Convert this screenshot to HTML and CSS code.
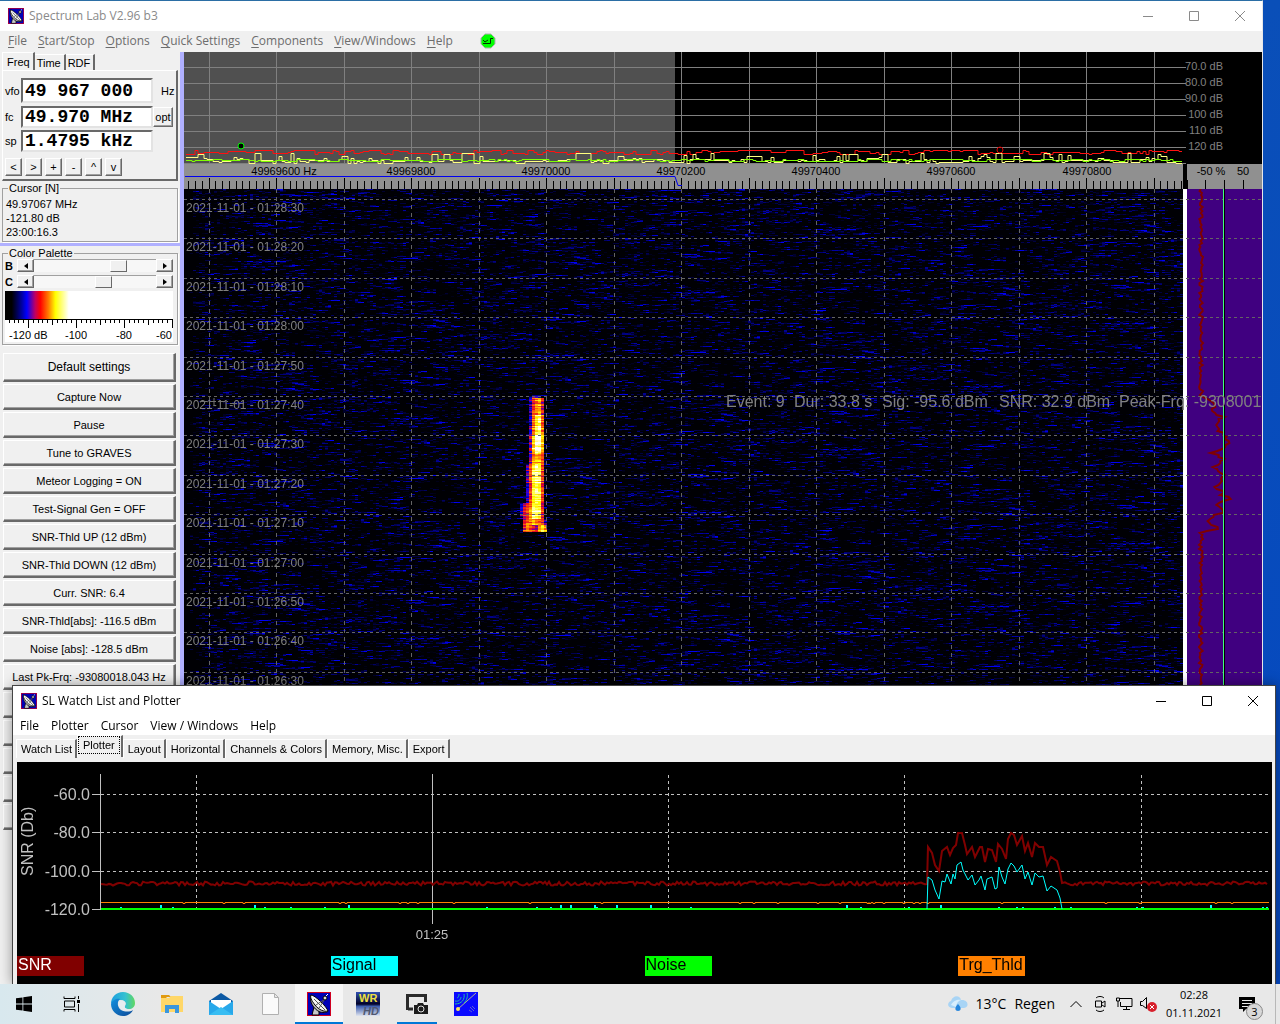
FILE: index.html
```html
<!DOCTYPE html>
<html lang="en">
<head>
    <meta charset="UTF-8">
    <meta name="viewport" content="width=device-width, initial-scale=1.0">
    <title>Spectrum Lab</title>

    <link rel="stylesheet" href="styles.css">
</head>

<body>

    <svg class="sprite" aria-hidden="true">
        <symbol id="dish" viewBox="0 0 24 24">
            <rect width="24" height="24" fill="#d00020"/>
            <rect x="1" y="1" width="22" height="22" fill="#0000b8"/>
            <path d="M5 23l2-8 3-1 2 5v4z" fill="#c8c8c8" stroke="#000"/>
            <path d="M4 3c-2 6 2 14 9 17 4 1 8 0 8-1z" fill="#b8b8b8" stroke="#000"/>
            <path d="M4 3c4 0 16 12 17 16-4 1-9-1-13-6S3 5 4 3z" fill="#f4f4f4" stroke="#000"/>
            <path d="M7 7l11 11M9 13l9-6M12 16l6-9" stroke="#555" fill="none"/>
            <circle cx="18" cy="6" r="2" fill="#ddd" stroke="#000"/>
            <path d="M19 4l2-2" stroke="#fff"/>
        </symbol>
        <symbol id="win-min" viewBox="0 0 10 10"><path d="M0 5.500h10" stroke="currentColor"/></symbol>
        <symbol id="win-max" viewBox="0 0 10 10"><path d="M.5.5h9v9h-9z" stroke="currentColor" fill="none"/></symbol>
        <symbol id="win-close" viewBox="0 0 10 10"><path d="M0 0l10 10M10 0L0 10" stroke="currentColor"/></symbol>
    </svg>

    <main class="desktop">

        <!-- main window -->
        <section class="window window_main">
            <header class="titlebar">
                <svg class="titlebar__icon"><use href="#dish"/></svg>
                <h1 class="titlebar__text">Spectrum Lab V2.96 b3</h1>
                <button class="titlebar__button" aria-label="Minimize"><svg><use href="#win-min"/></svg></button>
                <button class="titlebar__button" aria-label="Maximize"><svg><use href="#win-max"/></svg></button>
                <button class="titlebar__button" aria-label="Close"><svg><use href="#win-close"/></svg></button>
            </header>
            <nav class="menu">
                <button class="menu__item"><u>F</u>ile</button>
                <button class="menu__item"><u>S</u>tart/Stop</button>
                <button class="menu__item"><u>O</u>ptions</button>
                <button class="menu__item"><u>Q</u>uick Settings</button>
                <button class="menu__item"><u>C</u>omponents</button>
                <button class="menu__item"><u>V</u>iew/Windows</button>
                <button class="menu__item"><u>H</u>elp</button>
                <svg class="menu__status" viewBox="0 0 16 16">
                    <path d="M5 1h6l4 4v6l-4 4H5l-4-4V5z" fill="#00ff00" stroke="#b0b0b0"/>
                    <path d="M3 7l2 2 3-2M3 10.500h7.500v-5H13" fill="none" stroke="#003000"/>
                </svg>
            </nav>

            <div class="main">
                <aside class="sidebar">
                    <div class="tabs">
                        <button class="tabs__button _active">Freq</button>
                        <button class="tabs__button">Time</button>
                        <button class="tabs__button">RDF</button>
                    </div>
                    <div class="freq">
                        <div class="freq__row freq__row_tall">
                            <label for="vfo">vfo</label>
                            <input class="freq__input" id="vfo" type="text" value="49 967 000">
                            <span class="freq__unit">Hz</span>
                        </div>
                        <div class="freq__row">
                            <label for="fc">fc</label>
                            <input class="freq__input" id="fc" type="text" value="49.970 MHz">
                            <button class="freq__opt">opt</button>
                        </div>
                        <div class="freq__row">
                            <label for="sp">sp</label>
                            <input class="freq__input" id="sp" type="text" value="1.4795 kHz">
                        </div>
                        <div class="freq__buttons">
                            <button>&lt;</button>
                            <button>&gt;</button>
                            <button>+</button>
                            <button>-</button>
                            <button>^</button>
                            <button>v</button>
                        </div>
                    </div>

                    <fieldset class="group group_cursor">
                        <legend>Cursor [N]</legend>
                        <p>49.97067 MHz</p>
                        <p>-121.80 dB</p>
                        <p>23:00:16.3</p>
                    </fieldset>

                    <div class="sidebar__split"></div>

                    <fieldset class="group group_palette">
                        <legend>Color Palette</legend>
                        <div class="scroll">
                            <label for="bright">B</label>
                            <button aria-label="B down"><svg viewBox="0 0 4 6"><path d="M4 0v6L0 3z"/></svg></button>
                            <input id="bright" type="range" min="0" max="100" value="72">
                            <button aria-label="B up"><svg viewBox="0 0 4 6"><path d="M0 0v6l4-3z"/></svg></button>
                        </div>
                        <div class="scroll">
                            <label for="contrast">C</label>
                            <button aria-label="C down"><svg viewBox="0 0 4 6"><path d="M4 0v6L0 3z"/></svg></button>
                            <input id="contrast" type="range" min="0" max="100" value="58">
                            <button aria-label="C up"><svg viewBox="0 0 4 6"><path d="M0 0v6l4-3z"/></svg></button>
                        </div>
                        <div class="palette">
                            <div class="palette__colors"></div>
                            <svg class="palette__scale" id="paletteScale">
                                <text x="4" y="20">-120 dB</text>
                                <text x="60" y="20">-100</text>
                                <text x="111" y="20">-80</text>
                                <text x="151" y="20">-60</text>
                            </svg>
                        </div>
                    </fieldset>

                    <div class="actions">
                        <button class="actions__button actions__button_big">Default settings</button>
                        <button class="actions__button">Capture Now</button>
                        <button class="actions__button">Pause</button>
                        <button class="actions__button">Tune to GRAVES</button>
                        <button class="actions__button">Meteor Logging = ON</button>
                        <button class="actions__button">Test-Signal Gen = OFF</button>
                        <button class="actions__button">SNR-Thld UP (12 dBm)</button>
                        <button class="actions__button">SNR-Thld DOWN (12 dBm)</button>
                        <button class="actions__button">Curr. SNR: 6.4</button>
                        <button class="actions__button">SNR-Thld[abs]: -116.5 dBm</button>
                        <button class="actions__button">Noise [abs]: -128.5 dBm</button>
                        <button class="actions__button">Last Pk-Frq: -93080018.043 Hz</button>
                        <button class="actions__button"></button>
                        <button class="actions__button"></button>
                        <button class="actions__button"></button>
                        <button class="actions__button"></button>
                        <button class="actions__button"></button>
                    </div>
                </aside>

                <div class="plots">
                    <svg class="spectrum" id="spectrum">
                        <rect width="491" height="112" fill="#505050"/>
                        <g id="spectrumDraw"></g>
                        <circle cx="57" cy="94" r="3" fill="#000" stroke="#00ff00"/>
                        <circle cx="816" cy="98" r="3" fill="none" stroke="#e00000"/>
                        <svg x="100%" overflow="visible" class="spectrum__labels">
                            <text x="-39" y="18">70.0 dB</text>
                            <text x="-39" y="34">80.0 dB</text>
                            <text x="-39" y="50">90.0 dB</text>
                            <text x="-39" y="66">100 dB</text>
                            <text x="-39" y="82">110 dB</text>
                            <text x="-39" y="98">120 dB</text>
                        </svg>
                    </svg>

                    <div class="ruler">
                        <svg class="ruler__freq" id="ruler">
                            <g id="rulerDraw"></g>
                            <path d="M1 12.500H491L494 21.500H498" fill="none" stroke="#0000f0"/>
                            <text x="100" y="11">49969600 Hz</text>
                            <text x="227" y="11">49969800</text>
                            <text x="362" y="11">49970000</text>
                            <text x="497" y="11">49970200</text>
                            <text x="632" y="11">49970400</text>
                            <text x="767" y="11">49970600</text>
                            <text x="903" y="11">49970800</text>
                        </svg>
                        <svg class="ruler__side">
                            <path d="M.5 16v9M18.500 16v9M37.500 16v9M56.500 16v9" stroke="#000"/>
                            <text x="24" y="11">-50 %</text>
                            <text x="56" y="11">50</text>
                        </svg>
                    </div>

                    <div class="waterfall">
                        <canvas class="waterfall__canvas" id="waterfall"></canvas>
                        <div class="waterfall__side"></div>
                        <svg class="waterfall__grid" id="grid">
                            <g id="gridDraw"></g>
                            <g class="waterfall__times" id="times"></g>
                            <path d="M16 212.500H44M30 209v8M46 214.500H60" stroke="#707070" stroke-dasharray="7 2"/>
                            <svg x="100%" overflow="visible">
                                <path id="sideTrace" fill="none" stroke="#800000" stroke-width="2"/>
                                <path d="M-38.500 0V900" stroke="#40ff80"/>
                                <path d="M-37.500 0V900" stroke="#000"/>
                                <g class="waterfall__event">
                                    <text x="-536" y="218">Event: 9</text>
                                    <text x="-468" y="218">Dur: 33.8 s</text>
                                    <text x="-380" y="218">Sig: -95.6 dBm</text>
                                    <text x="-263" y="218">SNR: 32.9 dBm</text>
                                    <text x="-143" y="218">Peak-Frq: -9308001</text>
                                </g>
                            </svg>
                        </svg>
                    </div>
                </div>
            </div>
        </section>

        <!-- plotter window -->
        <section class="window window_plotter">
            <header class="titlebar">
                <svg class="titlebar__icon"><use href="#dish"/></svg>
                <h2 class="titlebar__text">SL Watch List and Plotter</h2>
                <button class="titlebar__button" aria-label="Minimize"><svg><use href="#win-min"/></svg></button>
                <button class="titlebar__button" aria-label="Maximize"><svg><use href="#win-max"/></svg></button>
                <button class="titlebar__button" aria-label="Close"><svg><use href="#win-close"/></svg></button>
            </header>
            <nav class="menu">
                <button class="menu__item">File</button>
                <button class="menu__item">Plotter</button>
                <button class="menu__item">Cursor</button>
                <button class="menu__item">View / Windows</button>
                <button class="menu__item">Help</button>
            </nav>
            <div class="tabs tabs_plotter">
                <button class="tabs__button">Watch List</button>
                <button class="tabs__button _active"><span>Plotter</span></button>
                <button class="tabs__button">Layout</button>
                <button class="tabs__button">Horizontal</button>
                <button class="tabs__button">Channels &amp; Colors</button>
                <button class="tabs__button">Memory, Misc.</button>
                <button class="tabs__button">Export</button>
            </div>
            <div class="plotter">
                <svg class="plotter__chart" id="plotter">
                    <g id="plotterGrid"></g>
                    <g class="plotter__labels">
                        <text x="73" y="38">-60.0</text>
                        <text x="73" y="76">-80.0</text>
                        <text x="73" y="115">-100.0</text>
                        <text x="73" y="153">-120.0</text>
                    </g>
                    <text class="plotter__axis" transform="translate(16 114) rotate(-90)">SNR (Db)</text>
                    <text class="plotter__time" x="415" y="177">01:25</text>
                    <g id="plotterTraces" fill="none"></g>
                </svg>
                <ul class="legend">
                    <li><span class="legend__item legend__item_snr">SNR</span></li>
                    <li><span class="legend__item legend__item_signal">Signal</span></li>
                    <li><span class="legend__item legend__item_noise">Noise</span></li>
                    <li><span class="legend__item legend__item_thld">Trg_Thld</span></li>
                </ul>
            </div>
        </section>
    </main>

    <footer class="taskbar">
        <button class="taskbar__button" aria-label="Start">
            <svg width="16" height="16" viewBox="0 0 16 16"><path d="M0 2.300L6.500 1.400v6.200H0zM7.300 1.300L16 0v7.600H7.300zM0 8.400h6.500v6.200L0 13.700zM7.300 8.400H16V16l-8.700-1.200z"/></svg>
        </button>
        <button class="taskbar__button" aria-label="Task view">
            <svg width="18" height="16" viewBox="0 0 18 16" fill="none" stroke="#000"><path d="M1 .5v2h11v-2M1 15.500v-2h11v2M1.500 5h10v6h-10zM15.500 0v3M15.500 8v8"/><path d="M14 4h3v3h-3z" fill="#000" stroke="none"/></svg>
        </button>
        <div class="taskbar__apps">
            <button class="taskbar__button" aria-label="Edge">
                <svg width="24" height="24" viewBox="0 0 24 24">
                    <defs>
                        <linearGradient id="edgeTop" x1="0" x2="1"><stop offset="0" stop-color="#1b9de0"/><stop offset=".6" stop-color="#35c1d0"/><stop offset="1" stop-color="#60d860"/></linearGradient>
                        <linearGradient id="edgeLow" x1="0" x2="1" y1="0" y2="1"><stop offset="0" stop-color="#1490df"/><stop offset="1" stop-color="#0c4a98"/></linearGradient>
                    </defs>
                    <path d="M0 12C0 5 5 0 12 0s12 5 12 11c0 4-3 6-6 6s-5-1-4-3c3-4-2-6-5-6-5 0-9 3-9 4z" fill="url(#edgeTop)"/>
                    <path d="M0 12c1-4 6-6 9-5-3 2-3 8 1 11 4 2 9 2 12 0-2 4-6 6-10 6C5 24 0 18 0 12z" fill="url(#edgeLow)"/>
                    <path d="M9 9c3-2 6 1 5 4-1 2 0 4 3 4-3 2-8 1-9-3 0-2 0-4 1-5z" fill="#e8edf0"/>
                </svg>
            </button>
            <button class="taskbar__button" aria-label="Explorer">
                <svg width="22" height="20" viewBox="0 0 22 20">
                    <path d="M0 1h8l2 2h-4l-2 2H0z" fill="#e09a10"/>
                    <path d="M0 4h8l2-2h12v16H0z" fill="#ffd768"/>
                    <path d="M4 19v-8h14v8h-4v-4H8v4z" fill="#3a96dd"/>
                </svg>
            </button>
            <button class="taskbar__button" aria-label="Mail">
                <svg width="24" height="22" viewBox="0 0 24 22">
                    <path d="M0 8l12-8 12 8v4H0z" fill="#0c59a4"/>
                    <path d="M2 7h20v7l-10 3L2 14z" fill="#fff"/>
                    <path d="M0 8l12 8 12-8v14H0z" fill="#28a8ea"/>
                    <path d="M0 22l12-8 12 8z" fill="#38bdf2"/>
                </svg>
            </button>
            <button class="taskbar__button" aria-label="Document">
                <svg width="17" height="22" viewBox="0 0 17 22"><path d="M.5.5h12l4 4v17H.5zM12.500.5v4h4" fill="#fafafa" stroke="#b0b0b0"/></svg>
            </button>
            <button class="taskbar__button taskbar__button_active" aria-label="Spectrum Lab">
                <svg width="24" height="24"><use href="#dish"/></svg>
            </button>
            <button class="taskbar__button" aria-label="WR HD">
                <svg width="24" height="24" viewBox="0 0 24 24">
                    <defs><linearGradient id="wr" x1="0" x2="0" y1="0" y2="1"><stop offset="0" stop-color="#3050b0"/><stop offset=".5" stop-color="#000028"/><stop offset=".6" stop-color="#4060b0"/><stop offset="1" stop-color="#e0e4ee"/></linearGradient></defs>
                    <rect width="24" height="24" fill="url(#wr)"/>
                    <text class="taskbar__wr" x="3" y="10">WR</text>
                    <text class="taskbar__hd" x="7" y="23">HD</text>
                </svg>
            </button>
            <button class="taskbar__button taskbar__button_open" aria-label="Capture">
                <svg width="24" height="20" viewBox="0 0 24 20">
                    <path d="M8 15H3M2.500 16V1.500h18V8" fill="none" stroke="#2a2a2a" stroke-width="3"/>
                    <path d="M9 11h3l1-2h5l1 2h4v9H9z" fill="#1c1c1c"/>
                    <circle cx="16" cy="15" r="3" fill="none" stroke="#e0e0e0"/>
                </svg>
            </button>
            <button class="taskbar__button" aria-label="Meteor">
                <svg width="24" height="24" viewBox="0 0 24 24">
                    <rect width="24" height="24" fill="#0a0aff"/>
                    <path d="M4 17L22 1" stroke="#b0b090"/>
                    <circle cx="4" cy="17" r="2" fill="#ffe860"/>
                    <path d="M1 9c4 1 6-2 6-4M1 12c7 0 10-5 9-10M3 6c1 0 2-2 2-4M10 11c3-3 4-7 3-10" fill="none" stroke="#20c0a0"/>
                    <path d="M16 15l4 4M18 14l3 3M15 18l3 2" stroke="#6060d0"/>
                </svg>
            </button>
        </div>

        <div class="tray">
            <button class="tray__weather">
                <svg width="20" height="16" viewBox="0 0 20 16">
                    <path d="M4 12c-5 0-5-6-1-7 2-6 9-6 10-1 7-1 9 7 3 8z" fill="#a8d4f5"/>
                    <path d="M3 9c2-5 8-6 10-5-3 1-5 4-5 7z" fill="#d8eefc"/>
                    <path d="M10 8c4 4 3 7 0 7s-4-3 0-7z" fill="#2686dc"/>
                </svg>
                <span>13°C</span>
                <span>Regen</span>
            </button>
            <button class="tray__icon" aria-label="Show hidden icons"><svg width="12" height="8" viewBox="0 0 12 8" fill="none" stroke="#000"><path d="M.5 7L6 1.500 11.500 7"/></svg></button>
            <button class="tray__icon" aria-label="Meet now"><svg width="13" height="16" viewBox="0 0 13 16" fill="none" stroke="#000"><path d="M2 2c2-2 6-2 8 0M2 14c2 2 6 2 8 0M1.500 5h6v6h-6zM8 7l3-2v6L8 9"/></svg></button>
            <button class="tray__icon" aria-label="Network"><svg width="17" height="14" viewBox="0 0 17 14" fill="none" stroke="#000"><path d="M4 1.500h12v8H4.500V5M7 12.500h7M10.500 9.500v3M.5 1v3h3V1zM2 4v6"/></svg></button>
            <button class="tray__icon" aria-label="Volume"><svg width="17" height="15" viewBox="0 0 17 15" fill="none" stroke="#000"><path d="M.5 4.500h2l4-4v11l-4-3h-2z"/><circle cx="12" cy="10" r="5" fill="#d8202c" stroke="none"/><path d="M10 8l4 4M14 8l-4 4" stroke="#fff"/></svg></button>
            <button class="tray__clock"><span>02:28</span><span>01.11.2021</span></button>
            <button class="tray__notes" aria-label="Notifications">
                <svg width="16" height="15" viewBox="0 0 16 15"><path d="M0 0h16v12H7l-3 3v-3H0z"/><path d="M3 3.500h10M3 6.500h10M3 9.500h6" stroke="#e8e8e8"/></svg>
                <span class="tray__badge">3</span>
            </button>
        </div>
    </footer>

    <script src="script.js"></script>
</body>

</html>
```

FILE: styles.css
```css
* {
    box-sizing: border-box;
}

body {
    margin: 0;
    height: 100vh;
    display: flex;
    flex-direction: column;
    overflow: hidden;
    font: 11px/14px "Liberation Sans", Arial, sans-serif;
    color: #000;
}

button {
    margin: 0;
    padding: 0;
    border: 0;
    background: none;
    font: inherit;
    color: inherit;
    white-space: nowrap;
}

svg {
    display: block;
}

.sprite {
    display: none;
}

.desktop {
    position: relative;
    flex: 1;
    overflow: hidden;
    background: linear-gradient(#0a4fb8, #0548c0);
}

/* ========== WINDOWS =========== */
.window {
    position: absolute;
    display: flex;
    flex-direction: column;
    background: #f0f0f0;
}

.window_main {
    top: 0;
    left: 0;
    right: 17px;
    bottom: 0;
    border-top: 1px solid #2b6ea5;
    border-right: 1px solid #e8e8e8;
}

.window_plotter {
    top: 685px;
    left: 12px;
    right: 4px;
    bottom: 0;
    border: 1px solid #444;
    border-bottom: 0;
    box-shadow: 0 0 12px rgba(0, 0, 0, 0.4);
}

.titlebar {
    display: flex;
    align-items: center;
    height: 30px;
    padding-left: 8px;
    background: #fff;
}

.titlebar__icon {
    width: 16px;
    height: 16px;
}

.titlebar__text {
    flex: 1;
    margin: 0;
    padding-left: 5px;
    font: 12px/16px "Open Sans", sans-serif;
}

.titlebar__button {
    display: flex;
    align-items: center;
    justify-content: center;
    width: 46px;
    height: 30px;
    padding-left: 2px;
}

.titlebar__button svg {
    width: 10px;
    height: 10px;
}

.window_main .titlebar {
    color: #8a8a8a;
}

.window_main .menu {
    color: #6d6d6d;
}

.menu {
    display: flex;
    align-items: center;
    gap: 11px;
    height: 20px;
    margin-bottom: 1px;
    padding-left: 8px;
    font: 12px/16px "Open Sans", sans-serif;
}

.menu u {
    text-underline-offset: 2px;
}

.menu__status {
    width: 16px;
    height: 16px;
    margin-left: 16px;
}

.window_plotter .menu {
    gap: 12px;
    height: 19px;
    margin: 0;
    padding-left: 7px;
    background: #fff;
}

.main {
    display: flex;
    flex: 1;
    min-height: 0;
}

/* ========== SIDEBAR =========== */
.sidebar {
    width: 184px;
    padding: 0 2px;
    border-right: 4px solid #b0b0ff;
    overflow: hidden;
}

.tabs {
    display: flex;
    align-items: flex-end;
    height: 18px;
}

.tabs__button {
    height: 16px;
    padding: 0 3px 0 2px;
    border-top: 1px solid #fff;
    border-right: 2px solid #696969;
}

.tabs__button._active {
    height: 18px;
    padding: 0 3px 0 4px;
    border-left: 1px solid #fff;
}

.freq {
    height: 111px;
    padding-top: 7px;
    border: 1px solid #fff;
    border-right: 2px solid #696969;
    border-bottom: 2px solid #696969;
}

.freq__row {
    display: flex;
    align-items: center;
    height: 22px;
    margin-bottom: 2px;
    padding-left: 2px;
}

.freq__row_tall {
    height: 25px;
    margin-bottom: 3px;
}

.freq__row label {
    flex: none;
    width: 16px;
}

.freq__input {
    flex: none;
    width: 132px;
    height: 100%;
    padding: 0 0 0 2px;
    border: 2px solid;
    border-color: #696969 #e3e3e3 #e3e3e3 #696969;
    background: #fff;
    font: bold 18px/20px "Liberation Mono", monospace;
}

.freq__unit {
    margin-left: 8px;
}

.freq__opt,
.freq__buttons button,
.scroll button,
.actions__button {
    border: 1px solid;
    border-color: #fff #696969 #696969 #fff;
    box-shadow: inset -1px -1px #a0a0a0;
    background: #f0f0f0;
}

.freq__opt {
    width: 20px;
    height: 20px;
}

.freq__buttons {
    display: flex;
    gap: 3px;
    padding: 4px 2px;
}

.freq__buttons button {
    width: 17px;
    height: 18px;
    line-height: 12px;
}

.group {
    min-width: 0;
    margin: 0;
    padding: 0;
    border: 1px solid #a0a0a0;
    box-shadow: 1px 1px #fff;
}

.group legend {
    margin-left: 5px;
    padding: 0 1px;
    line-height: 14px;
}

.group p {
    margin: 0 0 0 3px;
}

.group_cursor {
    height: 61px;
    padding-top: 2px;
}

.sidebar__split {
    height: 3px;
    margin: 1px -2px 0;
    background: #b0b0ff;
}

.group_palette {
    height: 99px;
}

.scroll {
    display: flex;
    align-items: center;
    height: 13px;
    margin: 0 4px 3px 2px;
}

.group_palette legend + .scroll {
    margin-top: -1px;
}

.scroll label {
    width: 12px;
    font-weight: bold;
}

.scroll button {
    display: flex;
    align-items: center;
    justify-content: center;
    width: 17px;
    height: 13px;
}

.scroll svg {
    width: 4px;
    height: 6px;
}

.scroll input {
    flex: 1;
    width: 0;
    height: 13px;
    margin: 0;
    appearance: none;
    background: #f7f7f7;
    border-top: 1px solid #a0a0a0;
}

.scroll input::-webkit-slider-thumb {
    appearance: none;
    width: 17px;
    height: 12px;
    border: 1px solid;
    border-color: #fff #696969 #696969 #fff;
    background: #f0f0f0;
}

.palette {
    margin: 0 4px 0 2px;
    background: #fff;
}

.palette__colors {
    height: 28px;
    background: linear-gradient(90deg, #000 4%, #0000a0 10%, #0000ff 13%, #c00060 18%, #ff0000 21%, #ff8000 26%, #ffff00 30%, #fff 38%);
}

.palette__scale {
    width: 100%;
    height: 23px;
}

/* buttons under the palette */
.actions {
    display: flex;
    flex-direction: column;
    gap: 2px;
    margin: 8px 2px 0 1px;
}

.actions__button {
    flex: none;
    height: 26px;
    border-right-width: 2px;
    border-bottom-width: 2px;
}

.actions__button_big {
    height: 29px;
    font-size: 12px;
}

/* ========== PLOTS =========== */
.plots {
    display: flex;
    flex: 1;
    flex-direction: column;
    min-width: 0;
    background: #000;
}

.spectrum {
    flex: none;
    width: 100%;
    height: 112px;
}

.spectrum__labels {
    fill: #808080;
    text-anchor: end;
}

.ruler {
    display: flex;
    flex: none;
    gap: 4px;
    height: 25px;
}

.ruler svg {
    height: 25px;
    background: #909090;
    text-anchor: middle;
}

.ruler__freq {
    flex: 1;
    min-width: 0;
}

.ruler__side {
    width: 75px;
}

.waterfall {
    position: relative;
    display: flex;
    flex: 1;
    min-height: 0;
}

.waterfall__canvas {
    flex: 1;
    min-width: 0;
    height: 100%;
    image-rendering: pixelated;
}

.waterfall__side {
    width: 79px;
    border-left: 4px solid #fff;
    background: #400080;
}

.waterfall__grid {
    position: absolute;
    top: 0;
    left: 0;
    width: 100%;
    height: 100%;
}

.waterfall__times {
    font-size: 12px;
    fill: #808080;
}

.waterfall__event {
    font-size: 16px;
    fill: #808080;
}

/* ========== PLOTTER =========== */
.tabs_plotter {
    height: 23px;
    padding-left: 3px;
}

.tabs_plotter .tabs__button {
    height: 19px;
    padding: 0 3px 1px 4px;
    border-left: 1px solid #fff;
}

.tabs_plotter ._active {
    height: 22px;
    margin-bottom: 1px;
    padding: 0 1px 3px 0;
}

.tabs_plotter span {
    display: block;
    padding: 1px 4px;
    border: 1px dotted #000;
}

.plotter {
    display: flex;
    flex: 1;
    flex-direction: column;
    border: solid #f0f0f0;
    border-width: 4px 3px 0 4px;
    background: #000;
}

.plotter__chart {
    width: 100%;
    height: 194px;
}

.plotter__labels,
.plotter__axis {
    font-size: 16px;
    fill: #c0c0c0;
}

.plotter__labels {
    text-anchor: end;
}

.plotter__time {
    font-size: 13px;
    fill: #c0c0c0;
    text-anchor: middle;
}

.legend {
    display: grid;
    grid-template-columns: repeat(4, 1fr);
    margin: 0;
    padding: 0;
    list-style: none;
    font-size: 16px;
    line-height: 18px;
}

.legend__item {
    display: block;
    width: 67px;
    height: 20px;
    padding-left: 1px;
}

.legend__item_snr {
    background: #800000;
    color: #fff;
}

.legend__item_signal {
    background: #00ffff;
}

.legend__item_noise {
    background: #00ff00;
}

.legend__item_thld {
    background: #ff8000;
}

/* ========== TASKBAR =========== */
.taskbar {
    display: flex;
    flex: none;
    height: 40px;
    background: linear-gradient(90deg, #d8e8ee, #e8e8e8 160px);
}

.taskbar__button {
    display: flex;
    align-items: center;
    justify-content: center;
    width: 48px;
    height: 40px;
}

.taskbar__apps {
    display: flex;
    gap: 1px;
    margin-left: 3px;
}

.taskbar__button_active {
    background: linear-gradient(#0078d7, #0078d7) bottom / 100% 2px no-repeat #f6f6f6;
}

.taskbar__button_open {
    background: linear-gradient(#0078d7, #0078d7) bottom / 40px 2px no-repeat;
}

.taskbar__wr,
.taskbar__hd {
    font: bold 11px "Liberation Sans", sans-serif;
    fill: #f0e040;
}

.taskbar__hd {
    font-style: italic;
    fill: #505870;
}

.tray {
    display: flex;
    align-items: center;
    margin: 0 4px 0 auto;
    padding-right: 20px;
    border-right: 1px solid #b8b8b8;
    font-family: "Open Sans", sans-serif;
}

.tray__weather {
    display: flex;
    align-items: center;
    gap: 8px;
    margin-right: 9px;
    font-size: 14px;
}

.tray__icon {
    display: flex;
    align-items: center;
    justify-content: center;
    width: 24px;
    height: 40px;
}

.tray__clock {
    display: flex;
    flex-direction: column;
    width: 68px;
    line-height: 18px;
    text-align: center;
}

.tray__notes {
    position: relative;
    margin-left: 11px;
}

.tray__badge {
    position: absolute;
    top: 6px;
    left: 7px;
    width: 17px;
    height: 17px;
    border: 1px solid #888;
    border-radius: 50%;
    background: #d8d8d8;
    line-height: 15px;
}
```

FILE: script.js
```js
let seed = 49967;

function rand() {
    seed = (seed * 1103515245 + 12345) % 2147483648;
    return seed / 2147483648;
}

function path(d, stroke, extra = '') {
    return `<path d="${d}" stroke="${stroke}" fill="none" ${extra}/>`;
}

const GRID_START = 25;
const GRID_STEP = 67.5;

// шкала палитры
function drawPaletteScale() {
    let svg = document.getElementById('paletteScale');
    let d = `M0 .5H${svg.clientWidth}`;
    for (let i = -5; i <= 30; i++) {
        let x = Math.round(24 + i * 4.8) - 0.5;
        d += `M${x} 0v${i % 10 == 0 ? 9 : i % 5 == 0 ? 6 : 4}`;
    }
    svg.insertAdjacentHTML('afterbegin', path(d, '#000'));
}

// ступенчатая линия шума
function noiseLine(width, base, jitter, peak) {
    let d = '';
    let value = base;
    for (let x = 2; x < width - 3; x += 3) {
        if (rand() < 0.5) value = base + Math.round((rand() - 0.5) * jitter);
        if (peak && rand() < 0.2) value = base - Math.round(rand() * peak);
        d += (d ? 'V' : `M${x} `) + (value + 0.5) + `H${x + 3}`;
    }
    return d;
}

function drawSpectrum() {
    let width = document.getElementById('ruler').clientWidth;
    let d = '';
    for (let x = GRID_START; x < width; x += GRID_STEP) d += `M${Math.floor(x) + 0.5} 0V112`;
    for (let y = 15; y < 112; y += 16) d += `M0 ${y + 0.5}H${width + 3}`;
    document.getElementById('spectrumDraw').innerHTML =
        path(d, '#808080') +
        path(noiseLine(width, 100, 5), '#ff1010') +
        path(noiseLine(width, 109, 4, 8), '#ffff80') +
        path(noiseLine(width, 108, 3), '#80ff00');
}

function drawRuler() {
    let width = document.getElementById('ruler').clientWidth;
    let d = '';
    for (let i = -3; GRID_START + i * 6.75 < width; i++) {
        d += `M${Math.floor(GRID_START + i * 6.75) + 0.5} ${i % 10 == 0 ? 14 : 17}V25`;
    }
    document.getElementById('rulerDraw').innerHTML = path(d, '#000');
}

// black - blue - red - yellow - white
function heat(v) {
    let stops = [[0, 0, 0], [0, 0, 255], [230, 0, 40], [255, 128, 0], [255, 255, 0], [255, 255, 255]];
    let pos = Math.max(0, Math.min(0.999, v)) * 5;
    let i = Math.floor(pos);
    let f = pos - i;
    return 'rgb(' + stops[i].map((c, n) => Math.round(c + (stops[i + 1][n] - c) * f)).join() + ')';
}

function drawWaterfall() {
    let canvas = document.getElementById('waterfall');
    let width = canvas.width = canvas.clientWidth;
    let height = canvas.height = canvas.clientHeight;
    let ctx = canvas.getContext('2d');
    ctx.fillStyle = '#000004';
    ctx.fillRect(0, 0, width, height);

    for (let y = 0; y < height; y++) {
        let v = 0;
        for (let x = 0; x < width; x += 3) {
            v = v * 0.6 + rand() * 0.4;
            let over = v - 0.56;
            let blue = over < 0 ? 0 : over * 350 + over * over * 2200;
            if (blue > 8) {
                ctx.fillStyle = `rgb(0,0,${Math.min(245, Math.round(blue))})`;
                ctx.fillRect(x, y, 3, 1);
            }
        }
    }

    // meteor echo, one level for each 3px column
    let parts = [
        { from: 206, to: 209, left: 345, levels: [0.1, 0.22, 0.25, 0.15] },
        { from: 209, to: 226, left: 345, levels: [0.2, 0.5, 0.6, 0.68, 0.42] },
        { from: 226, to: 246, left: 345, levels: [0.25, 0.62, 0.85, 0.95, 0.6] },
        { from: 246, to: 264, left: 345, levels: [0.35, 0.8, 1, 1, 0.75] },
        { from: 264, to: 276, left: 345, levels: [0.35, 0.62, 0.75, 0.7, 0.5] },
        { from: 276, to: 314, left: 342, levels: [0.25, 0.5, 0.82, 0.9, 0.85, 0.5] },
        { from: 314, to: 330, left: 336, levels: [0.2, 0.42, 0.48, 0.65, 0.9, 0.9, 0.85, 0.45] },
        { from: 330, to: 336, left: 339, levels: [0.4, 0.5, 0.6, 0.7, 0.6, 0.5, 0.5, 0.2] },
        { from: 336, to: 343, left: 339, levels: [0.5, 0.65, 0.6, 0.5, 0.4, 0.7, 0.85, 0.7] }
    ];
    parts.forEach(part => {
        for (let y = part.from; y < part.to; y++) {
            let row = (rand() - 0.5) * 0.25;
            part.levels.forEach((level, i) => {
                ctx.fillStyle = heat(level + row + (rand() - 0.5) * 0.16);
                ctx.fillRect(part.left + i * 3, y, 3, 1);
            });
        }
    });
}

// echo on the side trace, x from the right edge
const SIDE_ECHO = [[-61, 208], [-50, 211], [-49, 223], [-40, 228], [-45, 241], [-35, 248], [-34, 257], [-50, 264], [-37, 271], [-49, 278], [-40, 286], [-45, 298], [-39, 306], [-32, 309], [-44, 316], [-40, 324], [-54, 329], [-44, 341], [-61, 343]];

function sideX(y) {
    for (let i = 1; i < SIDE_ECHO.length; i++) {
        let [x1, y1] = SIDE_ECHO[i - 1];
        let [x2, y2] = SIDE_ECHO[i];
        if (y >= y1 && y < y2) return x1 + (x2 - x1) * (y - y1) / (y2 - y1) + (rand() - 0.5) * 6;
    }
    return -61 + (rand() - 0.5) * 4;
}

function drawGrid() {
    let svg = document.getElementById('grid');
    let width = document.getElementById('ruler').clientWidth;
    let height = svg.clientHeight;
    let rows = '';
    let cols = '';
    let labels = '';
    for (let x = GRID_START; x < width; x += GRID_STEP) cols += `M${Math.floor(x) + 0.5} 0V${height}`;
    for (let i = 0; 10 + i * 39.4 < height; i++) {
        let y = Math.floor(10.5 + i * 39.4);
        let seconds = 88 * 60 + 30 - i * 10;
        let mm = Math.floor(seconds / 60) - 60;
        let ss = String(seconds % 60).padStart(2, '0');
        rows += `M0 ${y + 0.5}H${svg.clientWidth}`;
        labels += `<text x="2" y="${y + 13}">2021-11-01 - 01:${mm}:${ss}</text>`;
    }
    document.getElementById('gridDraw').innerHTML =
        path(rows, '#646464', 'stroke-dasharray="3 3"') +
        path(cols, '#646464', 'stroke-dasharray="4 4"');
    document.getElementById('times').innerHTML = labels;

    let side = 'M-61 0';
    for (let y = 2; y < height; y += 2) side += `L${sideX(y).toFixed(1)} ${y}`;
    document.getElementById('sideTrace').setAttribute('d', side);
}

// echo on the plotter, x/y in the chart
const SNR_ECHO = [[910, 122], [911, 85], [915, 91], [918, 103], [922, 109], [925, 89], [930, 85], [933, 93], [936, 86], [939, 83], [941, 71], [945, 71], [948, 83], [950, 92], [955, 85], [958, 95], [963, 85], [965, 85], [968, 100], [971, 87], [975, 88], [979, 100], [981, 82], [985, 87], [989, 97], [991, 77], [994, 71], [997, 73], [1000, 83], [1005, 74], [1008, 89], [1011, 81], [1015, 95], [1018, 81], [1022, 85], [1026, 85], [1030, 103], [1034, 95], [1040, 99], [1043, 110], [1045, 121]];
const SIGNAL_ECHO = [[910, 147], [911, 115], [915, 118], [918, 128], [922, 137], [925, 119], [928, 120], [930, 112], [934, 122], [936, 112], [938, 117], [940, 103], [944, 100], [946, 108], [951, 118], [955, 113], [958, 123], [962, 118], [964, 114], [968, 128], [970, 117], [975, 115], [978, 127], [980, 126], [982, 105], [985, 115], [988, 122], [991, 107], [994, 101], [997, 104], [1000, 110], [1005, 103], [1008, 117], [1011, 110], [1015, 123], [1018, 111], [1022, 115], [1026, 114], [1030, 129], [1034, 124], [1040, 128], [1043, 136], [1045, 147]];

function drawPlotter() {
    let svg = document.getElementById('plotter');
    let right = svg.clientWidth - 3;
    let solid = 'M83.500 12V148M415.500 12V162';
    let dashed = '';
    [32.5, 70.5, 109.5, 147.5].forEach(y => {
        solid += `M75 ${y}H83`;
        dashed += `M84 ${y}H${right}`;
    });
    [179.5, 651.5, 887.5, 1124.5].forEach(x => dashed += `M${x} 13V148`);
    document.getElementById('plotterGrid').innerHTML =
        path(solid, '#c0c0c0') + path(dashed, '#c0c0c0', 'stroke-dasharray="3 3"');

    let snr = 'M84 122';
    let thld = 'M84 140.500';
    let marks = '';
    for (let x = 86; x < right; x += 2) {
        if (x < 909 || x > 1046) snr += `L${x} ${(121.5 + (rand() - 0.5) * 4).toFixed(1)}`;
        if (x == 908) snr += SNR_ECHO.map(p => `L${p[0]} ${p[1]}`).join('');
        if (rand() < 0.04) thld += `H${x}v1h2v-1`;
        if (rand() < 0.05) marks += `M${x} 146v-${rand() < 0.3 ? 3 : 1}`;
    }
    let signal = 'M' + SIGNAL_ECHO.map(p => p.join(' ')).join('L');
    document.getElementById('plotterTraces').innerHTML =
        path(snr, '#800000', 'stroke-width="2"') +
        path(thld + `H${right}`, '#ff8000') +
        path(`M84 147H${right}`, '#00ff00', 'stroke-width="2"') +
        path(marks, '#00ffff', 'stroke-width="2"') +
        path(signal, '#00ffff');
}

function drawAll() {
    seed = 49967;
    drawSpectrum();
    drawRuler();
    drawWaterfall();
    drawGrid();
    drawPlotter();
}

drawPaletteScale();
drawAll();
window.addEventListener('resize', drawAll);
```
